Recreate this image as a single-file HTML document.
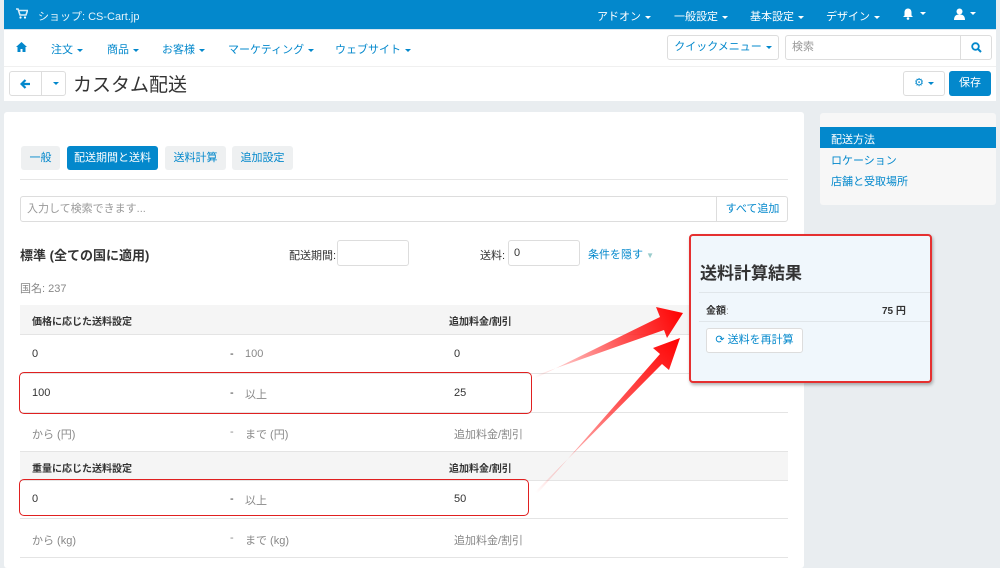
<!DOCTYPE html>
<html><head><meta charset="utf-8"><style>
*{box-sizing:border-box;margin:0;padding:0}
body{width:1000px;height:568px;overflow:hidden;background:#e9edf0;font-family:"Liberation Sans","Noto Sans CJK JP",sans-serif;font-size:11px;color:#333;position:relative}
.a{position:absolute}
.top{left:4px;top:0;width:992px;height:29px;background:#0388cc;color:#fff}
.nav{left:4px;top:29px;width:992px;height:72px;background:#fff;border-top:1px solid #d8e6ef}
.blue{color:#0388cc}
.car{display:inline-block;border-left:3px solid transparent;border-right:3px solid transparent;border-top:3px solid currentColor;vertical-align:middle;margin-left:4px}
.btn{border:1px solid #ddd;border-radius:3px;background:#fff}
.tab{top:146px;height:24px;border-radius:3px;background:#eef0f1;color:#0388cc;font-size:11px;line-height:24px;text-align:center}
.row{left:20px;width:768px;border-bottom:1px solid #e4e4e4}
.cell{position:absolute;top:0}
.d{font-family:"Liberation Sans",sans-serif}
</style></head><body>
<div class="a top">
 <svg class="a" style="left:12px;top:8px" width="12" height="11" viewBox="0 0 12 11"><path d="M0 1h2l2 6h6l1.5-4.5H3.2" fill="none" stroke="#fff" stroke-width="1.6" opacity=".85"/><circle cx="4.5" cy="9.5" r="1.1" fill="#fff"/><circle cx="9" cy="9.5" r="1.1" fill="#fff"/></svg>
 <span class="a" style="left:34px;top:8px;font-size:11px;opacity:.9">ショップ: CS-Cart.jp</span>
 <span class="a" style="left:593px;top:8px">アドオン<i class="car"></i></span>
 <span class="a" style="left:670px;top:8px">一般設定<i class="car"></i></span>
 <span class="a" style="left:746px;top:8px">基本設定<i class="car"></i></span>
 <span class="a" style="left:822px;top:8px">デザイン<i class="car"></i></span>
 <svg class="a" style="left:898px;top:8px" width="12" height="12" viewBox="0 0 12 12"><path d="M6 0.5c-2.5 0-3.5 2-3.5 4v3L1 9h10L9.5 7.5v-3c0-2-1-4-3.5-4z" fill="#fff"/><circle cx="6" cy="10.5" r="1.3" fill="#fff"/></svg>
 <i class="car a" style="left:912px;top:12px;color:#fff"></i>
 <svg class="a" style="left:950px;top:8px" width="11" height="12" viewBox="0 0 11 12"><circle cx="5.5" cy="3.5" r="3" fill="#fff"/><path d="M0 12c0-4 2-5.5 5.5-5.5S11 8 11 12z" fill="#fff"/></svg>
 <i class="car a" style="left:962px;top:12px;color:#fff"></i>
</div>
<div class="a nav">
 <svg class="a" style="left:12px;top:12px" width="11" height="10" viewBox="0 0 11 10"><path d="M5.5 0L0 5h1.5v5h3V7h2v3h3V5H11z" fill="#0388cc"/></svg>
 <span class="a blue" style="left:47px;top:11px">注文<i class="car"></i></span>
 <span class="a blue" style="left:103px;top:11px">商品<i class="car"></i></span>
 <span class="a blue" style="left:158px;top:11px">お客様<i class="car"></i></span>
 <span class="a blue" style="left:224px;top:11px">マーケティング<i class="car"></i></span>
 <span class="a blue" style="left:331px;top:11px">ウェブサイト<i class="car"></i></span>
 <div class="a btn blue" style="left:663px;top:5px;width:112px;height:25px;line-height:23px;text-align:center">クイックメニュー<i class="car"></i></div>
 <div class="a btn" style="left:781px;top:5px;width:207px;height:25px;color:#999;line-height:23px;padding-left:6px">検索<span class="a" style="left:174px;top:0;width:32px;height:23px;border-left:1px solid #ddd"><svg class="a" style="left:10px;top:6px" width="11" height="11" viewBox="0 0 11 11"><circle cx="4.5" cy="4.5" r="3.3" fill="none" stroke="#0388cc" stroke-width="1.8"/><path d="M7 7l3 3" stroke="#0388cc" stroke-width="2"/></svg></span></div>
 <div class="a" style="left:0;top:36px;width:992px;border-top:1px solid #f0f0f0"></div>
 <div class="a btn" style="left:5px;top:41px;width:57px;height:25px"><svg class="a" style="left:10px;top:7px" width="11" height="10" viewBox="0 0 11 10"><path d="M10 5H2M5.5 1L1.5 5l4 4" fill="none" stroke="#0388cc" stroke-width="2.2"/></svg><span class="a" style="left:31px;top:0;height:23px;border-left:1px solid #ddd;width:25px;text-align:center;line-height:22px;color:#0388cc"><i class="car"></i></span></div>
 <span class="a" style="left:69px;top:40px;font-size:19px;color:#333">カスタム配送</span>
 <div class="a btn blue" style="left:899px;top:41px;width:42px;height:25px;text-align:center;line-height:23px">⚙<i class="car"></i></div>
 <div class="a" style="left:945px;top:41px;width:42px;height:25px;background:#0388cc;border-radius:3px;color:#fff;text-align:center;line-height:25px">保存</div>
</div>
<div class="a" style="left:4px;top:112px;width:800px;height:456px;background:#fff;border-radius:3px"></div>
<div class="a tab" style="left:21px;width:39px">一般</div>
<div class="a tab" style="left:67px;width:91px;background:#0388cc;color:#fff">配送期間と送料</div>
<div class="a tab" style="left:165px;width:61px">送料計算</div>
<div class="a tab" style="left:232px;width:61px">追加設定</div>
<div class="a" style="left:20px;top:179px;width:768px;border-top:1px solid #e6e6e6"></div>
<div class="a btn" style="left:20px;top:196px;width:768px;height:26px;color:#999;line-height:24px;padding-left:6px">入力して検索できます...<span class="a blue" style="left:695px;top:0;width:72px;height:24px;border-left:1px solid #ddd;text-align:center">すべて追加</span></div>
<span class="a" style="left:20px;top:245px;font-size:13px;font-weight:bold">標準 (全ての国に適用)</span>
<span class="a" style="left:289px;top:247px">配送期間:</span>
<div class="a btn" style="left:337px;top:240px;width:72px;height:26px"></div>
<span class="a" style="left:480px;top:247px">送料:</span>
<div class="a btn" style="left:508px;top:240px;width:72px;height:26px;padding:6px 5px">0</div>
<span class="a blue" style="left:588px;top:246px">条件を隠す <span style="color:#9cc;font-size:8px">▼</span></span>
<span class="a" style="left:20px;top:280px;color:#888">国名: 237</span>
<div class="a row" style="top:305px;height:30px;background:#f5f5f5;font-weight:bold;font-size:10px"><span class="cell" style="left:12px;top:8px">価格に応じた送料設定</span><span class="cell" style="left:429px;top:8px">追加料金/割引</span></div>
<div class="a row" style="top:335px;height:39px"><span class="cell" style="left:12px;top:13px">0</span><span class="cell d" style="left:210px;top:13px">-</span><span class="cell" style="left:225px;top:13px;color:#888">100</span><span class="cell" style="left:434px;top:13px">0</span></div>
<div class="a row" style="top:374px;height:39px"><span class="cell" style="left:12px;top:13px">100</span><span class="cell d" style="left:210px;top:13px">-</span><span class="cell" style="left:225px;top:12px;color:#888">以上</span><span class="cell" style="left:434px;top:13px">25</span></div>
<div class="a row" style="top:413px;height:39px;color:#888"><span class="cell" style="left:12px;top:13px">から (円)</span><span class="cell d" style="left:210px;top:13px">-</span><span class="cell" style="left:225px;top:13px">まで (円)</span><span class="cell" style="left:434px;top:13px">追加料金/割引</span></div>
<div class="a row" style="top:452px;height:29px;background:#f5f5f5;font-weight:bold;font-size:10px"><span class="cell" style="left:12px;top:8px">重量に応じた送料設定</span><span class="cell" style="left:429px;top:8px">追加料金/割引</span></div>
<div class="a row" style="top:481px;height:38px"><span class="cell" style="left:12px;top:12px">0</span><span class="cell d" style="left:210px;top:12px">-</span><span class="cell" style="left:225px;top:11px;color:#888">以上</span><span class="cell" style="left:434px;top:12px">50</span></div>
<div class="a row" style="top:519px;height:39px;color:#888"><span class="cell" style="left:12px;top:13px">から (kg)</span><span class="cell d" style="left:210px;top:13px">-</span><span class="cell" style="left:225px;top:13px">まで (kg)</span><span class="cell" style="left:434px;top:13px">追加料金/割引</span></div>
<div class="a" style="left:19px;top:372px;width:513px;height:42px;border:1.5px solid #e02020;border-radius:5px"></div>
<div class="a" style="left:19px;top:479px;width:510px;height:37px;border:1.5px solid #e02020;border-radius:5px"></div>
<div class="a" style="left:820px;top:113px;width:176px;height:92px;background:#f7f7f7;border-radius:3px"></div>
<div class="a" style="left:820px;top:127px;width:176px;height:21px;background:#0388cc;color:#fff;padding:4px 11px">配送方法</div>
<span class="a blue" style="left:831px;top:152px">ロケーション</span>
<span class="a blue" style="left:831px;top:173px">店舗と受取場所</span>
<svg class="a" style="left:0;top:0" width="1000" height="568"><defs>
<linearGradient id="g1" x1="535" y1="378" x2="685" y2="315" gradientUnits="userSpaceOnUse"><stop offset="0" stop-color="#f00" stop-opacity="0"/><stop offset=".6" stop-color="#f22" stop-opacity=".8"/><stop offset="1" stop-color="#f00"/></linearGradient>
<linearGradient id="g2" x1="535" y1="492" x2="685" y2="340" gradientUnits="userSpaceOnUse"><stop offset="0" stop-color="#f00" stop-opacity="0"/><stop offset=".6" stop-color="#f22" stop-opacity=".8"/><stop offset="1" stop-color="#f00"/></linearGradient></defs>
<polygon points="534,376 664,330 667,338 683,313 656,307 660,317 536,378" fill="url(#g1)"/>
<polygon points="535,492 662,364 669,370 680,338 653,348 660,354 537,494" fill="url(#g2)"/>
</svg>
<div class="a" style="left:689px;top:234px;width:243px;height:149px;background:#f0f7fc;border:2px solid #e53030;border-radius:4px;box-shadow:1px 2px 3px rgba(0,0,0,.3)">
 <span class="a" style="left:9px;top:23px;font-size:17px;font-weight:bold">送料計算結果</span>
 <div class="a" style="left:8px;top:56px;width:231px;border-top:1px solid #e0e6ea"></div>
 <span class="a" style="left:15px;top:66px;font-size:10px;font-weight:bold">金額<span style="font-weight:normal;color:#888">:</span></span>
 <span class="a" style="left:191px;top:66px;font-size:10px;font-weight:bold">75 円</span>
 <div class="a" style="left:8px;top:85px;width:231px;border-top:1px solid #e0e6ea"></div>
 <div class="a btn blue" style="left:15px;top:92px;width:97px;height:25px;line-height:23px;text-align:center">⟳ 送料を再計算</div>
</div>
</body></html>
